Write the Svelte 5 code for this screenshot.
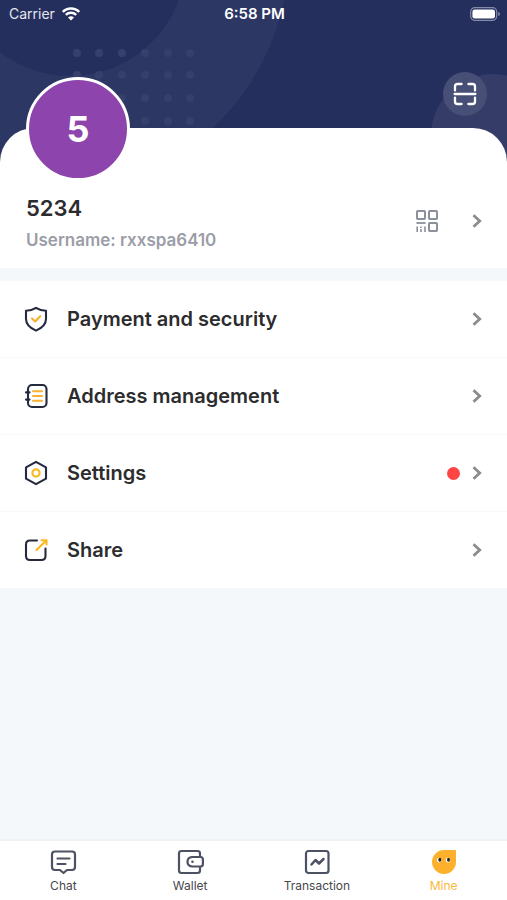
<script>
  const user = { name: '5234', username: 'rxxspa6410' }

  const menu = [
    { id: 'security', label: 'Payment and security', badge: false },
    { id: 'address', label: 'Address management', badge: false },
    { id: 'settings', label: 'Settings', badge: true },
    { id: 'share', label: 'Share', badge: false }
  ]

  const tabs = [
    { id: 'chat', label: 'Chat' },
    { id: 'wallet', label: 'Wallet' },
    { id: 'transaction', label: 'Transaction' },
    { id: 'mine', label: 'Mine' }
  ]

  let active = $state('mine')

  // dot pattern behind the avatar
  const dotRows = [53, 75, 98, 121]
  const dotCols = [77, 99, 122, 145, 168, 190]
</script>

{#snippet chevron()}
  <svg class="chevron" width="10" height="14" viewBox="0 0 10 14" aria-hidden="true">
    <path d="M1.5 1.3 L7.7 7 L1.5 12.7" fill="none" stroke="#8c8c8f" stroke-width="2.8" />
  </svg>
{/snippet}

<div class="page">
  <header>
    <svg class="backdrop" viewBox="0 0 507 170" preserveAspectRatio="xMidYMin slice" aria-hidden="true">
      <rect width="507" height="170" fill="#252f5d" />
      <circle cx="48" cy="-48" r="241" fill="#2d3763" />
      <circle cx="70" cy="-40" r="116" fill="#252f5d" />
      <circle cx="493" cy="136" r="62" fill="#353c68" />
      {#each dotRows as y}
        {#each dotCols as x}
          <circle cx={x} cy={y} r="4" fill="#36406c" />
        {/each}
      {/each}
    </svg>

    <div class="status">
      <span class="carrier">
        Carrier
        <svg width="18" height="14" viewBox="0 0 18 14" aria-hidden="true">
          <path d="M0.8 4.9 A11.4 11.4 0 0 1 17.2 4.9" fill="none" stroke="#fff" stroke-width="2.5" />
          <path d="M3.8 7.9 A7.4 7.4 0 0 1 14.2 7.9" fill="none" stroke="#fff" stroke-width="2.3" />
          <path d="M9 13.6 L6 10.6 A4.3 4.3 0 0 1 12 10.6 Z" fill="#fff" />
        </svg>
      </span>
      <span class="time">6:58 PM</span>
      <svg class="battery" width="30" height="14" viewBox="0 0 30 14" aria-hidden="true">
        <rect x="0.7" y="0.7" width="26" height="12.6" rx="4" fill="none" stroke="#868ba8" stroke-width="1.2" />
        <rect x="2.4" y="2.4" width="22.6" height="9.2" rx="2.4" fill="#fff" />
        <path d="M28.2 5 Q30 5.6 30 7 Q30 8.4 28.2 9 Z" fill="#868ba8" />
      </svg>
    </div>

    <button class="scan" aria-label="Scan">
      <svg width="24" height="24" viewBox="0 0 24 24" fill="none" stroke="#fff" stroke-width="2.3" stroke-linecap="round">
        <path d="M2 8.4 V4.6 Q2 2 4.6 2 H8.6" />
        <path d="M15.4 2 H19.4 Q22 2 22 4.6 V8.4" />
        <path d="M22 15.6 V19.4 Q22 22 19.4 22 H15.4" />
        <path d="M8.6 22 H4.6 Q2 22 2 19.4 V15.6" />
        <path d="M1.6 12 H22.4" />
      </svg>
    </button>
  </header>

  <section class="profile">
    <div class="avatar">{user.name[0]}</div>
    <div class="info">
      <div class="names">
        <h1>{user.name}</h1>
        <p>Username: {user.username}</p>
      </div>
      <div class="links">
        <button class="qr" aria-label="My QR code">
          <svg width="24" height="24" viewBox="0 0 24 24" fill="none" stroke="#8b909c" stroke-width="2">
            <rect x="2" y="2" width="8" height="8" rx="0.8" />
            <rect x="14" y="2" width="8" height="8" rx="0.8" />
            <rect x="14" y="14" width="8" height="8" rx="0.8" />
            <path d="M1.4 14 H10.6" stroke-width="1.8" />
            <path d="M2.2 17.4 V23 M6 17.4 V19 M6 20 V23 M10 17.4 V23" stroke-width="1.6" />
          </svg>
        </button>
        {@render chevron()}
      </div>
    </div>
  </section>

  <ul class="menu">
    {#each menu as item (item.id)}
      <li>
        <button class="row">
          <svg width="24" height="26" viewBox="0 0 24 26" fill="none" stroke="#262a3f" stroke-width="2.1" stroke-linecap="round" stroke-linejoin="round" aria-hidden="true">
            {#if item.id === 'security'}
              <path d="M12 1.8 Q16.5 4.6 22 4.8 V13 C22 18.5 17.5 22.2 12 24.6 C6.5 22.2 2 18.5 2 13 V4.8 Q7.5 4.6 12 1.8 Z" />
              <path d="M8 12.4 L11.2 15.4 L16.2 10.2" stroke="#f9ae2b" />
            {:else if item.id === 'address'}
              <rect x="4" y="2" width="18.5" height="22" rx="4" />
              <path d="M2 9.4 H5.5 M2 16.6 H5.5" />
              <path d="M9 8.3 H18 M9 13 H18 M9 17.7 H18" stroke="#f9b233" />
            {:else if item.id === 'settings'}
              <path d="M12 1.8 L22 7.3 V18.7 L12 24.2 L2 18.7 V7.3 Z" />
              <circle cx="12" cy="13" r="3.6" stroke="#fbb81f" stroke-width="2.2" />
            {:else}
              <path d="M13 3.5 H6 Q2 3.5 2 7.5 V19 Q2 23 6 23 H17.5 Q21.5 23 21.5 19 V11.5" />
              <path d="M12.5 13 L22.5 3.2 M17.5 3.2 H22.5 V7.5" stroke="#fbb81f" />
            {/if}
          </svg>
          <span class="label">{item.label}</span>
          {#if item.badge}
            <span class="dot"></span>
          {/if}
          {@render chevron()}
        </button>
      </li>
    {/each}
  </ul>

  <nav>
    {#each tabs as tab (tab.id)}
      <button class="tab" class:active={active === tab.id} onclick={() => (active = tab.id)}>
        <svg width="28" height="26" viewBox="0 0 28 26" fill="none" stroke="#4c5263" stroke-width="2.2" stroke-linecap="round" stroke-linejoin="round" aria-hidden="true">
          {#if tab.id === 'chat'}
            <path d="M6 2.5 H23 Q26 2.5 26 5.5 V18 Q26 21 23 21 H18 L14.5 24 L11 21 H6 Q3 21 3 18 V5.5 Q3 2.5 6 2.5 Z" />
            <path d="M8.5 9.5 H20.5 M8.5 15 H16.5" />
          {:else if tab.id === 'wallet'}
            <path d="M24 7.5 V4.5 Q24 2 21.5 2 H5.5 Q3 2 3 4.5 V21.5 Q3 24 5.5 24 H21.5 Q24 24 24 21.5 V18" />
            <path d="M16 8 H24.5 Q26.900 8 26.900 10.500 V15 Q26.900 17.500 24.500 17.500 H16 Q11.500 17 11.500 12.750 Q11.500 8.500 16 8 Z" />
            <circle cx="16.500" cy="12.700" r="0.700" stroke-width="1.200" />
          {:else if tab.id === 'transaction'}
            <rect x="3" y="2" width="22.5" height="22" rx="2.5" />
            <path d="M8.5 15.5 L12.5 11 L16 14.5 L20.5 10" stroke-width="2.5" />
          {:else}
            <path d="M14 1 H25 Q26 1 26 2 V13.5 A12 12 0 1 1 14 1 Z" fill="#fdb02c" stroke="none" />
            <g stroke="none">
              <ellipse cx="9.2" cy="11" rx="2.2" ry="2.6" fill="#fff" />
              <ellipse cx="18" cy="11" rx="2.2" ry="2.6" fill="#fff" />
              <ellipse cx="9.8" cy="10.8" rx="1.5" ry="2" fill="#222" />
              <ellipse cx="18.5" cy="10.8" rx="1.5" ry="2" fill="#222" />
            </g>
          {/if}
        </svg>
        <span>{tab.label}</span>
      </button>
    {/each}
  </nav>
</div>

<style>
  :global(body) {
    margin: 0;
    background: #f4f8fb;
  }

  .page {
    display: flex;
    flex-direction: column;
    min-height: 100vh;
    font-family: Inter, 'Liberation Sans', sans-serif;
    color: #2c2c2e;
  }

  button {
    border: 0;
    padding: 0;
    background: none;
    font: inherit;
    color: inherit;
    cursor: pointer;
  }

  svg {
    display: block;
    flex: none;
  }

  header {
    position: relative;
    display: flex;
    flex-direction: column;
    height: 170px;
    background: #252f5d;
  }

  .backdrop {
    position: absolute;
    inset: 0;
    width: 100%;
    height: 100%;
  }

  .status {
    position: relative;
    display: grid;
    grid-template-columns: 1fr auto 1fr;
    align-items: center;
    height: 27px;
    padding: 0 7px 0 9px;
    font-size: 14px;
    color: #fff;
  }

  .carrier {
    display: flex;
    align-items: center;
    gap: 7px;
    color: #e4e6ee;
  }

  .time {
    font-size: 15px;
    font-weight: 600;
  }

  .battery {
    justify-self: end;
  }

  .scan {
    position: relative;
    display: grid;
    place-items: center;
    align-self: flex-end;
    width: 44px;
    height: 44px;
    margin: 45px 20px 0 0;
    border-radius: 50%;
    background: #484f77;
  }

  /* the white card slides up over the header */
  .profile {
    position: relative;
    margin-top: -42px;
    padding: 0 25px 15px 26px;
    border-radius: 34px 34px 0 0;
    background: #fff;
  }

  .avatar {
    display: grid;
    place-items: center;
    box-sizing: border-box;
    width: 104px;
    height: 104px;
    margin-top: -51px;
    border: 3px solid #fff;
    border-radius: 50%;
    background: #8e44ad;
    font-size: 36px;
    font-weight: 700;
    color: #fff;
  }

  .info {
    display: flex;
    align-items: flex-start;
    padding-top: 12px;
  }

  .names {
    flex: 1;
  }

  h1 {
    margin: 0;
    font-size: 22px;
    line-height: 30px;
    font-weight: 600;
  }

  p {
    margin: 5px 0 0;
    font-size: 17px;
    line-height: 25px;
    font-weight: 600;
    color: #9b9da8;
  }

  .links {
    display: flex;
    align-items: center;
    gap: 33px;
    padding-top: 16px;
  }

  .menu {
    margin: 12px 0 0;
    padding: 0;
    list-style: none;
    background: #fff;
  }

  li {
    border-top: 1px solid #f7f8f9;
  }

  .row {
    display: flex;
    align-items: center;
    width: 100%;
    height: 76px;
    padding: 0 25px 0 24px;
    text-align: left;
  }

  .label {
    flex: 1;
    margin-left: 19px;
    font-size: 20px;
    font-weight: 600;
  }

  .dot {
    width: 13px;
    height: 13px;
    margin-right: 12px;
    border-radius: 50%;
    background: #ff4444;
  }

  nav {
    display: grid;
    grid-template-columns: repeat(4, 1fr);
    margin-top: auto;
    border-top: 2px solid #eff1f4;
    background: #fff;
  }

  .tab {
    display: flex;
    flex-direction: column;
    align-items: center;
    gap: 3px;
    height: 59px;
    padding-top: 8px;
    font-size: 12px;
    line-height: 16px;
    color: #47484c;
  }

  .tab.active {
    color: #fcb73e;
  }
</style>
